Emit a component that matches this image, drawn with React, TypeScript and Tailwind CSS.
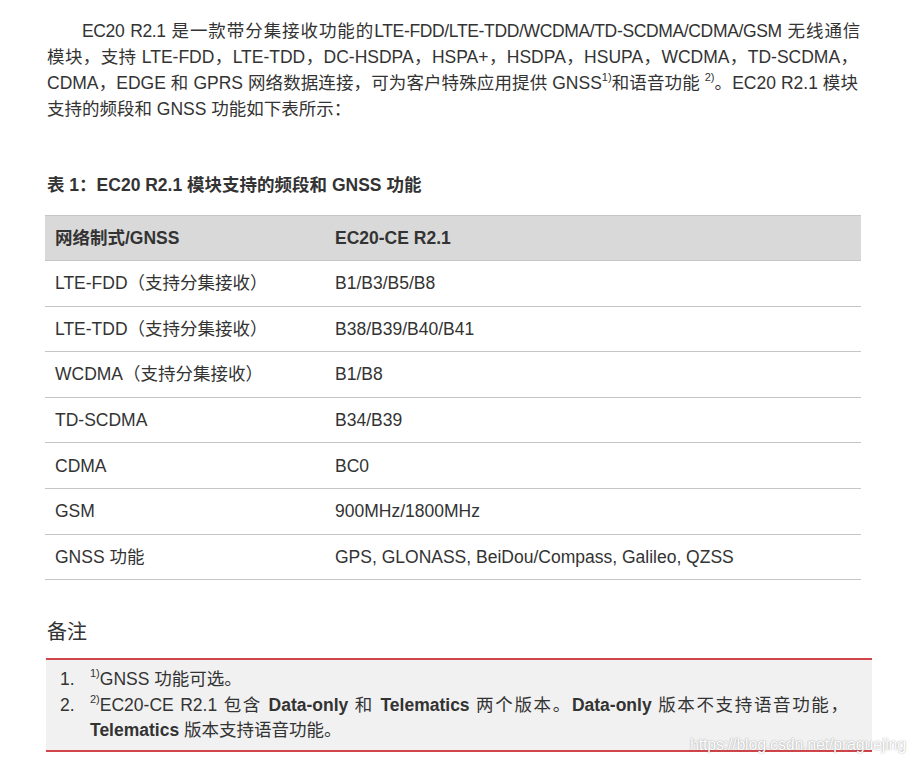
import React from "react";

const FONT = "'Liberation Sans', 'Noto Sans CJK SC', sans-serif";

const rows: [string, string][] = [
  ["LTE-FDD（支持分集接收）", "B1/B3/B5/B8"],
  ["LTE-TDD（支持分集接收）", "B38/B39/B40/B41"],
  ["WCDMA（支持分集接收）", "B1/B8"],
  ["TD-SCDMA", "B34/B39"],
  ["CDMA", "BC0"],
  ["GSM", "900MHz/1800MHz"],
  ["GNSS 功能", "GPS, GLONASS, BeiDou/Compass, Galileo, QZSS"],
];

function Sup({ children }: { children: React.ReactNode }) {
  return <sup className="text-[11px] relative -top-[1px] align-super leading-none">{children}</sup>;
}

export default function App() {
  return (
    <div className="relative w-[918px] h-[764px] bg-white text-[#333333] overflow-hidden" style={{ fontFamily: FONT }}>
      {/* paragraph */}
      <div className="pt-[18px] pl-[47px] w-[860px] text-[17.5px] leading-[26px]">
        <div className="pl-[35px] text-justify [text-align-last:justify] tracking-[-0.35px]">
          EC20 R2.1 是一款带分集接收功能的LTE-FDD/LTE-TDD/WCDMA/TD-SCDMA/CDMA/GSM 无线通信
        </div>
        <div className="text-justify [text-align-last:justify] pr-[2px]">
          模块，支持 LTE-FDD，LTE-TDD，DC-HSDPA，HSPA+，HSDPA，HSUPA，WCDMA，TD-SCDMA，
        </div>
        <div className="text-justify [text-align-last:justify] pr-[2px]">
          CDMA，EDGE 和 GPRS 网络数据连接，可为客户特殊应用提供 GNSS<Sup>1)</Sup>和语音功能 <Sup>2)</Sup>。EC20 R2.1 模块
        </div>
        <div>支持的频段和 GNSS 功能如下表所示：</div>
      </div>

      {/* caption */}
      <div className="mt-[51px] pl-[47px] text-[17.5px] leading-[24px] font-bold">
        表 1：EC20 R2.1 模块支持的频段和 GNSS 功能
      </div>

      {/* table */}
      <div className="mt-[18px] ml-[45px] w-[816px] text-[17.5px]">
        <div className="flex h-[46px] items-center bg-[#d9d9d9] border-t border-b border-[#c6c6c6] font-bold">
          <div className="w-[290px] pl-[10px]">网络制式/GNSS</div>
          <div className="flex-1">EC20-CE R2.1</div>
        </div>
        {rows.map(([a, b]) => (
          <div key={a} className="flex h-[45.6px] items-center border-b border-[#c6c6c6]">
            <div className="w-[290px] pl-[10px]">{a}</div>
            <div className="flex-1">{b}</div>
          </div>
        ))}
      </div>

      {/* notes */}
      <div className="mt-[39px] pl-[47px] text-[20px] leading-[26px]">备注</div>
      <div className="mt-[13px] ml-[46px] w-[826px] bg-[#f1f1f1] border-t-2 border-b-2 border-[#d2454a] pt-[7px] pb-[6px] text-[17.5px] leading-[25.5px]">
        <div className="flex">
          <div className="w-[44px] pl-[14px]">1.</div>
          <div className="flex-1 pr-[24px]">
            <Sup>1)</Sup>GNSS 功能可选。
          </div>
        </div>
        <div className="flex">
          <div className="w-[44px] pl-[14px]">2.</div>
          <div className="flex-1 pr-[24px]">
            <div className="text-justify [text-align-last:justify]">
              <Sup>2)</Sup>EC20-CE R2.1 包含 <b>Data-only</b> 和 <b>Telematics</b> 两个版本。<b>Data-only</b> 版本不支持语音功能，
            </div>
            <div>
              <b>Telematics</b> 版本支持语音功能。
            </div>
          </div>
        </div>
      </div>

      {/* watermark */}
      <div className="absolute left-[690px] top-[734px] text-[16px] leading-[22px] text-white [text-shadow:0_0_1.5px_rgba(0,0,0,0.45)] tracking-[-0.2px]">
        https://blog.csdn.net/praguejing
      </div>
    </div>
  );
}
